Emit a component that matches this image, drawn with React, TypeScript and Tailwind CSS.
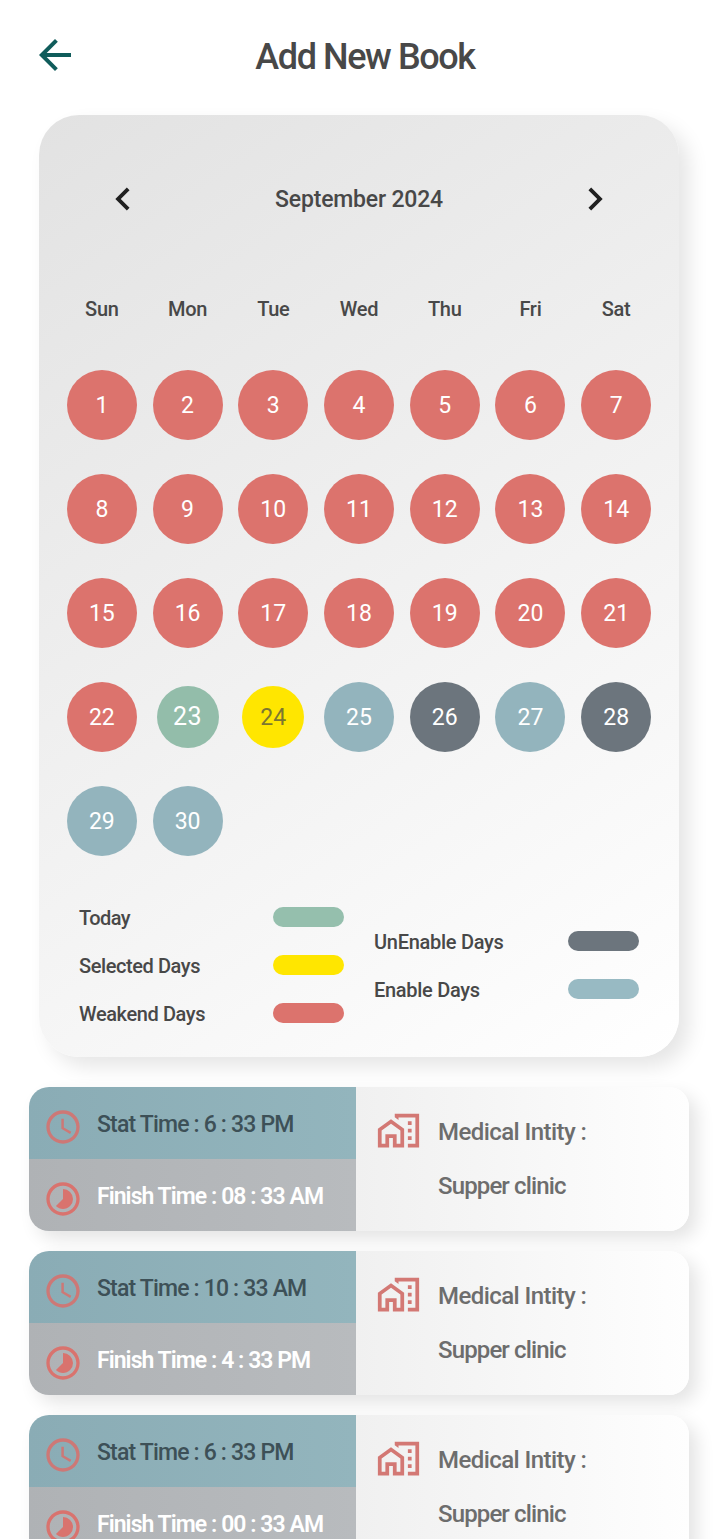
import {
  MdArrowBack,
  MdNavigateBefore,
  MdNavigateNext,
  MdOutlineAccessTime,
  MdOutlineHomeWork,
  MdOutlineTimelapse,
} from 'react-icons/md';

const weekdays = ['Sun', 'Mon', 'Tue', 'Wed', 'Thu', 'Fri', 'Sat'];
const enabledDays = [25, 27, 29, 30];
const disabledDays = [26, 28];

function dayClass(day: number): string {
  if (day === 23) return 'size-[62px] bg-[#93bdaa] text-white text-[25px] tracking-[0.4px]';
  if (day === 24) return 'size-[62px] bg-[#ffe600] pt-[2px] text-[#7c7630] text-[23px]';
  if (enabledDays.includes(day)) return 'size-[70px] bg-[#93b4bd] pt-[2px] text-white text-[23px]';
  if (disabledDays.includes(day)) return 'size-[70px] bg-[#6c757d] pt-[2px] text-white text-[23px]';
  return 'size-[70px] bg-[#dc736d] pt-[2px] text-white text-[23px]';
}

function Legend({ label, color, tracking }: { label: string; color: string; tracking: string }) {
  return (
    <div className="flex h-12 w-[265px] items-center justify-between">
      <span className={`mt-[2px] text-[20px] font-medium whitespace-nowrap ${tracking}`}>{label}</span>
      <span className={`h-5 w-[71px] rounded-full ${color}`} />
    </div>
  );
}

const bookings = [
  { start: '6 : 33 PM', finish: '08 : 33 AM' },
  { start: '10 : 33 AM', finish: '4 : 33 PM' },
  { start: '6 : 33 PM', finish: '00 : 33 AM' },
];

function Booking({ start, finish }: { start: string; finish: string }) {
  return (
    <article className="flex h-36 shrink-0 overflow-hidden rounded-[20px] shadow-[8px_8px_18px_rgba(0,0,0,0.11)]">
      <div className="w-[327px] shrink-0 text-[23px] font-medium whitespace-nowrap">
        <div className="flex h-[72px] items-center bg-linear-to-r from-[#8aacb5] to-[#93b5bd] pl-[14px] text-[#3d5057]">
          <MdOutlineAccessTime className="mt-2 mr-[14px] size-10 text-[#cd7876]" />
          <span className="mt-[5px] tracking-[-0.82px]">Stat Time : {start}</span>
        </div>
        <div className="flex h-[72px] items-center bg-linear-to-r from-[#afb2b5] to-[#b8bbbe] pl-[14px] text-white">
          <MdOutlineTimelapse className="mt-2 mr-[14px] size-10 text-[#d9736e]" />
          <span className="mt-[5px] font-semibold tracking-[-0.95px]">Finish Time : {finish}</span>
        </div>
      </div>
      <div className="flex grow bg-linear-to-r from-[#f0f0f0] to-[#fefefe] pl-5">
        <MdOutlineHomeWork className="mt-[21px] mr-px size-[45px] text-[#d37874]" />
        <div className="ml-4 pt-[18px] text-[24px] leading-[54px] font-medium whitespace-nowrap text-[#6d6d6d]">
          <p className="tracking-[-0.57px]">Medical Intity :</p>
          <p className="tracking-[-0.87px]">Supper clinic</p>
        </div>
      </div>
    </article>
  );
}

export default function App() {
  return (
    <main className="flex h-[1539px] w-[719px] flex-col overflow-hidden bg-white font-['Roboto','Noto_Sans',sans-serif] text-[#484848]">
      <header className="grid h-[115px] shrink-0 grid-cols-[72px_1fr_92px] items-center pl-[31px] pb-[5px]">
        <button aria-label="Back">
          <MdArrowBack className="size-12 text-[#105c5b]" />
        </button>
        <h1 className="pt-1 text-center text-[36px] font-medium tracking-[-1.4px]">Add New Book</h1>
      </header>

      <section className="mx-[39px] h-[942px] w-[640px] shrink-0 rounded-[40px] bg-[linear-gradient(146deg,#e2e2e2,#ffffff)] px-5 pt-[61px] shadow-[10px_10px_20px_rgba(0,0,0,0.1)]">
        <div className="flex h-[46px] items-center justify-between px-[41px]">
          <button aria-label="Previous month">
            <MdNavigateBefore className="size-[46px] text-[#202020]" />
          </button>
          <h2 className="pt-[2px] text-[23px] font-medium tracking-[-0.2px]">September 2024</h2>
          <button aria-label="Next month">
            <MdNavigateNext className="size-[46px] text-[#202020]" />
          </button>
        </div>

        <div className="mt-[72px] grid h-[30px] grid-cols-7 items-center text-center text-[20px] font-medium tracking-[-0.3px]">
          {weekdays.map((name) => (
            <span key={name}>{name}</span>
          ))}
        </div>

        <div className="mt-[29px] grid auto-rows-[104px] grid-cols-7 place-items-center">
          {Array.from({ length: 30 }, (_, i) => i + 1).map((day) => (
            <span key={day} className={`flex items-center justify-center rounded-full ${dayClass(day)}`}>
              {day}
            </span>
          ))}
        </div>

        <div className="mt-5 flex items-center gap-[30px] pl-5">
          <div>
            <Legend label="Today" color="bg-[#95bfad]" tracking="tracking-[-0.6px]" />
            <Legend label="Selected Days" color="bg-[#ffe600]" tracking="tracking-[-0.42px]" />
            <Legend label="Weakend Days" color="bg-[#dc736d]" tracking="tracking-[-0.4px]" />
          </div>
          <div>
            <Legend label="UnEnable Days" color="bg-[#6c757d]" tracking="tracking-[-0.28px]" />
            <Legend label="Enable Days" color="bg-[#98bac3]" tracking="tracking-[-0.3px]" />
          </div>
        </div>
      </section>

      <section className="mt-[30px] flex w-[689px] flex-col gap-5 pl-[29px]">
        {bookings.map((booking, index) => (
          <Booking key={index} {...booking} />
        ))}
      </section>
    </main>
  );
}
